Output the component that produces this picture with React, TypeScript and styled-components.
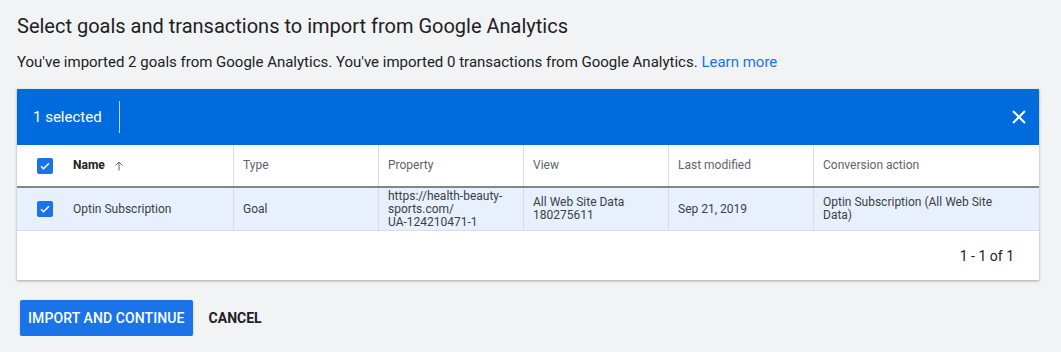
import React from "react";
import styled, { createGlobalStyle } from "styled-components";

const Global = createGlobalStyle`
  html, body { margin: 0; padding: 0; background: #f1f3f4; }
  body { font-family: Roboto, "Noto Sans", Arial, sans-serif; color: #202124; }
`;

const Page = styled.div`
  padding: 13px 22px 0 17px;
  width: 1061px;
  box-sizing: border-box;
`;

const Title = styled.h1`
  margin: 0;
  font-size: 20px;
  line-height: 26px;
  font-weight: 400;
  color: #202124;
`;

const Sub = styled.p`
  margin: 13px 0 0;
  font-size: 15px;
  line-height: 20px;
  color: #202124;
`;

const Link = styled.a`
  color: #1a73e8;
  text-decoration: none;
`;

const Card = styled.div`
  margin-top: 17px;
  width: 1022px;
  background: #fff;
  box-shadow: 0 1px 2px rgba(60, 64, 67, 0.3), 0 1px 3px 1px rgba(60, 64, 67, 0.1);
`;

const SelBar = styled.div`
  height: 56px;
  background: #006bdc;
  display: flex;
  align-items: center;
  padding: 0 8px 0 16px;
  color: #fff;
`;

const SelText = styled.span`
  font-size: 15px;
  padding-right: 17px;
`;

const SelDivider = styled.div`
  width: 1px;
  height: 32px;
  background: rgba(255, 255, 255, 0.75);
`;

const Spacer = styled.div`
  flex: 1;
`;

const CloseBtn = styled.button`
  background: none;
  border: 0;
  padding: 0;
  width: 24px;
  height: 24px;
  display: flex;
  align-items: center;
  justify-content: center;
  cursor: pointer;
`;

const Row = styled.div<{ $kind: "head" | "data" | "" }>`
  display: grid;
  grid-template-columns: 217px 145px 145px 145px 145px 1fr;
  height: ${(p) => (p.$kind === "head" ? "41px" : "42px")};
  background: ${(p) => (p.$kind === "data" ? "#e8f0fe" : "#fff")};
  border-bottom: ${(p) => (p.$kind === "head" ? "2px solid #80868b" : "1px solid #dadce0")};
`;

const Cell = styled.div<{ $head?: boolean; $last?: boolean }>`
  display: flex;
  align-items: center;
  padding: 0 9px;
  font-size: 12px;
  line-height: 13px;
  color: ${(p) => (p.$head ? "#5f6368" : "#3c4043")};
  border-right: ${(p) => (p.$last ? "0" : "1px solid #dadce0")};
  overflow: hidden;
`;

const FirstCell = styled(Cell)`
  padding-left: 20px;
  gap: 20px;
`;

const NameHead = styled.span`
  font-weight: 700;
  color: #202124;
  display: flex;
  align-items: center;
  gap: 8px;
`;

const Box = styled.span`
  width: 16px;
  height: 16px;
  border-radius: 2px;
  background: #1a73e8;
  display: flex;
  align-items: center;
  justify-content: center;
  flex-shrink: 0;
`;

const Footer = styled.div`
  height: 49px;
  display: flex;
  align-items: center;
  justify-content: flex-end;
  padding-right: 25px;
  font-size: 14px;
  color: #202124;
`;

const Actions = styled.div`
  margin-top: 20px;
  display: flex;
  align-items: center;
  gap: 16px;
  padding-left: 3px;
`;

const Primary = styled.button`
  height: 36px;
  padding: 0 8px;
  background: #1a73e8;
  color: #fff;
  border: 0;
  border-radius: 2px;
  font-family: Roboto, sans-serif;
  font-size: 14px;
  font-weight: 500;
  letter-spacing: 0.1px;
  box-shadow: 0 1px 2px rgba(60, 64, 67, 0.3);
`;

const Text = styled.button`
  height: 36px;
  padding: 0;
  background: none;
  border: 0;
  color: #202124;
  font-family: Roboto, sans-serif;
  font-size: 14px;
  font-weight: 700;
`;

const Check = () => (
  <Box>
    <svg width="12" height="12" viewBox="0 0 24 24">
      <path d="M4 12.5l5 5L20 6.5" fill="none" stroke="#fff" strokeWidth="3" />
    </svg>
  </Box>
);

export default function App() {
  return (
    <>
      <Global />
      <Page>
        <Title>Select goals and transactions to import from Google Analytics</Title>
        <Sub>
          You've imported 2 goals from Google Analytics. You've imported 0 transactions from Google Analytics.{" "}
          <Link href="#">Learn more</Link>
        </Sub>
        <Card>
          <SelBar>
            <SelText>1 selected</SelText>
            <SelDivider />
            <Spacer />
            <CloseBtn aria-label="close">
              <svg width="14" height="14" viewBox="0 0 14 14">
                <path d="M1 1L13 13M13 1L1 13" stroke="#fff" strokeWidth="2" />
              </svg>
            </CloseBtn>
          </SelBar>
          <Row $kind="head">
            <FirstCell $head>
              <Check />
              <NameHead>
                Name
                <svg width="12" height="12" viewBox="0 0 24 24">
                  <path d="M12 21V4M5 11l7-7 7 7" fill="none" stroke="#5f6368" strokeWidth="2" />
                </svg>
              </NameHead>
            </FirstCell>
            <Cell $head>Type</Cell>
            <Cell $head>Property</Cell>
            <Cell $head>View</Cell>
            <Cell $head>Last modified</Cell>
            <Cell $head $last>Conversion action</Cell>
          </Row>
          <Row $kind="data">
            <FirstCell>
              <Check />
              <span>Optin Subscription</span>
            </FirstCell>
            <Cell>Goal</Cell>
            <Cell>
              https://health-beauty-
              <br />
              sports.com/
              <br />
              UA-124210471-1
            </Cell>
            <Cell>
              All Web Site Data
              <br />
              180275611
            </Cell>
            <Cell>Sep 21, 2019</Cell>
            <Cell $last>
              Optin Subscription (All Web Site
              <br />
              Data)
            </Cell>
          </Row>
          <Footer>1 - 1 of 1</Footer>
        </Card>
        <Actions>
          <Primary>IMPORT AND CONTINUE</Primary>
          <Text>CANCEL</Text>
        </Actions>
      </Page>
    </>
  );
}
